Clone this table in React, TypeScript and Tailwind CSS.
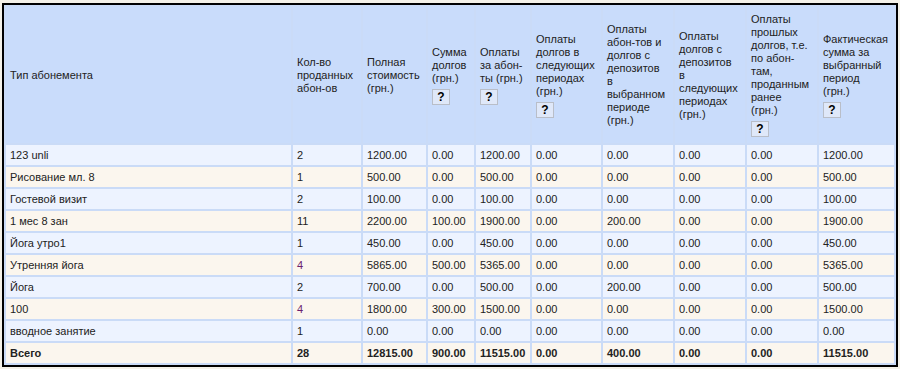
import React from 'react';

type Row = { name: string; qty: string; purple?: boolean; vals: string[] };

const rows: Row[] = [
  { name: '123 unli', qty: '2', vals: ['1200.00', '0.00', '1200.00', '0.00', '0.00', '0.00', '0.00', '1200.00'] },
  { name: 'Рисование мл. 8', qty: '1', vals: ['500.00', '0.00', '500.00', '0.00', '0.00', '0.00', '0.00', '500.00'] },
  { name: 'Гостевой визит', qty: '2', vals: ['100.00', '0.00', '100.00', '0.00', '0.00', '0.00', '0.00', '100.00'] },
  { name: '1 мес 8 зан', qty: '11', vals: ['2200.00', '100.00', '1900.00', '0.00', '200.00', '0.00', '0.00', '1900.00'] },
  { name: 'Йога утро1', qty: '1', vals: ['450.00', '0.00', '450.00', '0.00', '0.00', '0.00', '0.00', '450.00'] },
  { name: 'Утренняя йога', qty: '4', purple: true, vals: ['5865.00', '500.00', '5365.00', '0.00', '0.00', '0.00', '0.00', '5365.00'] },
  { name: 'Йога', qty: '2', vals: ['700.00', '0.00', '500.00', '0.00', '200.00', '0.00', '0.00', '500.00'] },
  { name: '100', qty: '4', purple: true, vals: ['1800.00', '300.00', '1500.00', '0.00', '0.00', '0.00', '0.00', '1500.00'] },
  { name: 'вводное занятие', qty: '1', vals: ['0.00', '0.00', '0.00', '0.00', '0.00', '0.00', '0.00', '0.00'] },
];

const total = ['12815.00', '900.00', '11515.00', '0.00', '400.00', '0.00', '0.00', '11515.00'];

const headers: { lines: string[]; help?: boolean }[] = [
  { lines: ['Кол-во', 'проданных', 'абон-ов'] },
  { lines: ['Полная', 'стоимость', '(грн.)'] },
  { lines: ['Сумма', 'долгов', '(грн.)'], help: true },
  { lines: ['Оплаты', 'за абон-', 'ты (грн.)'], help: true },
  { lines: ['Оплаты', 'долгов в', 'следующих', 'периодах', '(грн.)'], help: true },
  { lines: ['Оплаты', 'абон-тов и', 'долгов с', 'депозитов', 'в', 'выбранном', 'периоде', '(грн.)'] },
  { lines: ['Оплаты', 'долгов с', 'депозитов', 'в', 'следующих', 'периодах', '(грн.)'] },
  { lines: ['Оплаты', 'прошлых', 'долгов, т.е.', 'по абон-', 'там,', 'проданным', 'ранее', '(грн.)'], help: true },
  { lines: ['Фактическая', 'сумма за', 'выбранный', 'период', '(грн.)'], help: true },
];

const colWidths = ['w-[287px]', 'w-[70px]', 'w-[65px]', 'w-[48px]', 'w-[56px]', 'w-[71px]', 'w-[72px]', 'w-[72px]', 'w-[72px]', 'w-[77px]'];

const HelpBox = () => (
  <div className="mt-[4px] w-[18px] h-[16px] border border-[#b9bec8] bg-[#dfe8f9] flex items-center justify-center text-[12px] font-bold leading-none text-black">
    ?
  </div>
);

const cell = 'border-2 border-[#cadbf7] px-[4px] align-middle';

export default function App() {
  return (
    <div
      className="w-[900px] h-[369px] bg-[#f4f1e8] pt-[3px] pl-[2px] text-[11px] text-[#222]"
      style={{ fontFamily: '"Liberation Sans", Arial, sans-serif' }}
    >
      <div className="w-[896px] border-2 border-black bg-white">
        <table className="w-[892px] table-fixed border-collapse">
          <colgroup>
            {colWidths.map((w, i) => (
              <col key={i} className={w} />
            ))}
          </colgroup>
          <thead>
            <tr className="bg-[#c9dcfb] h-[138px]">
              <th className={`${cell} text-left font-normal`}>Тип абонемента</th>
              {headers.map((h, i) => (
                <th key={i} className={`${cell} text-left font-normal leading-[13px]`}>
                  {h.lines.map((l, j) => (
                    <div key={j} className="whitespace-nowrap">{l}</div>
                  ))}
                  {h.help && <HelpBox />}
                </th>
              ))}
            </tr>
          </thead>
          <tbody>
            {rows.map((r, i) => (
              <tr key={i} className={`h-[22px] ${i % 2 === 0 ? 'bg-[#edf3ff]' : 'bg-[#fbf6ee]'}`}>
                <td className={`${cell} whitespace-nowrap`}>{r.name}</td>
                <td className={`${cell} ${r.purple ? 'text-[#6b1f6e]' : ''}`}>{r.qty}</td>
                {r.vals.map((v, j) => (
                  <td key={j} className={`${cell} whitespace-nowrap`}>{v}</td>
                ))}
              </tr>
            ))}
            <tr className="h-[22px] bg-[#fbf6ee] font-bold">
              <td className={cell}>Всего</td>
              <td className={cell}>28</td>
              {total.map((v, j) => (
                <td key={j} className={`${cell} whitespace-nowrap`}>{v}</td>
              ))}
            </tr>
          </tbody>
        </table>
      </div>
    </div>
  );
}
